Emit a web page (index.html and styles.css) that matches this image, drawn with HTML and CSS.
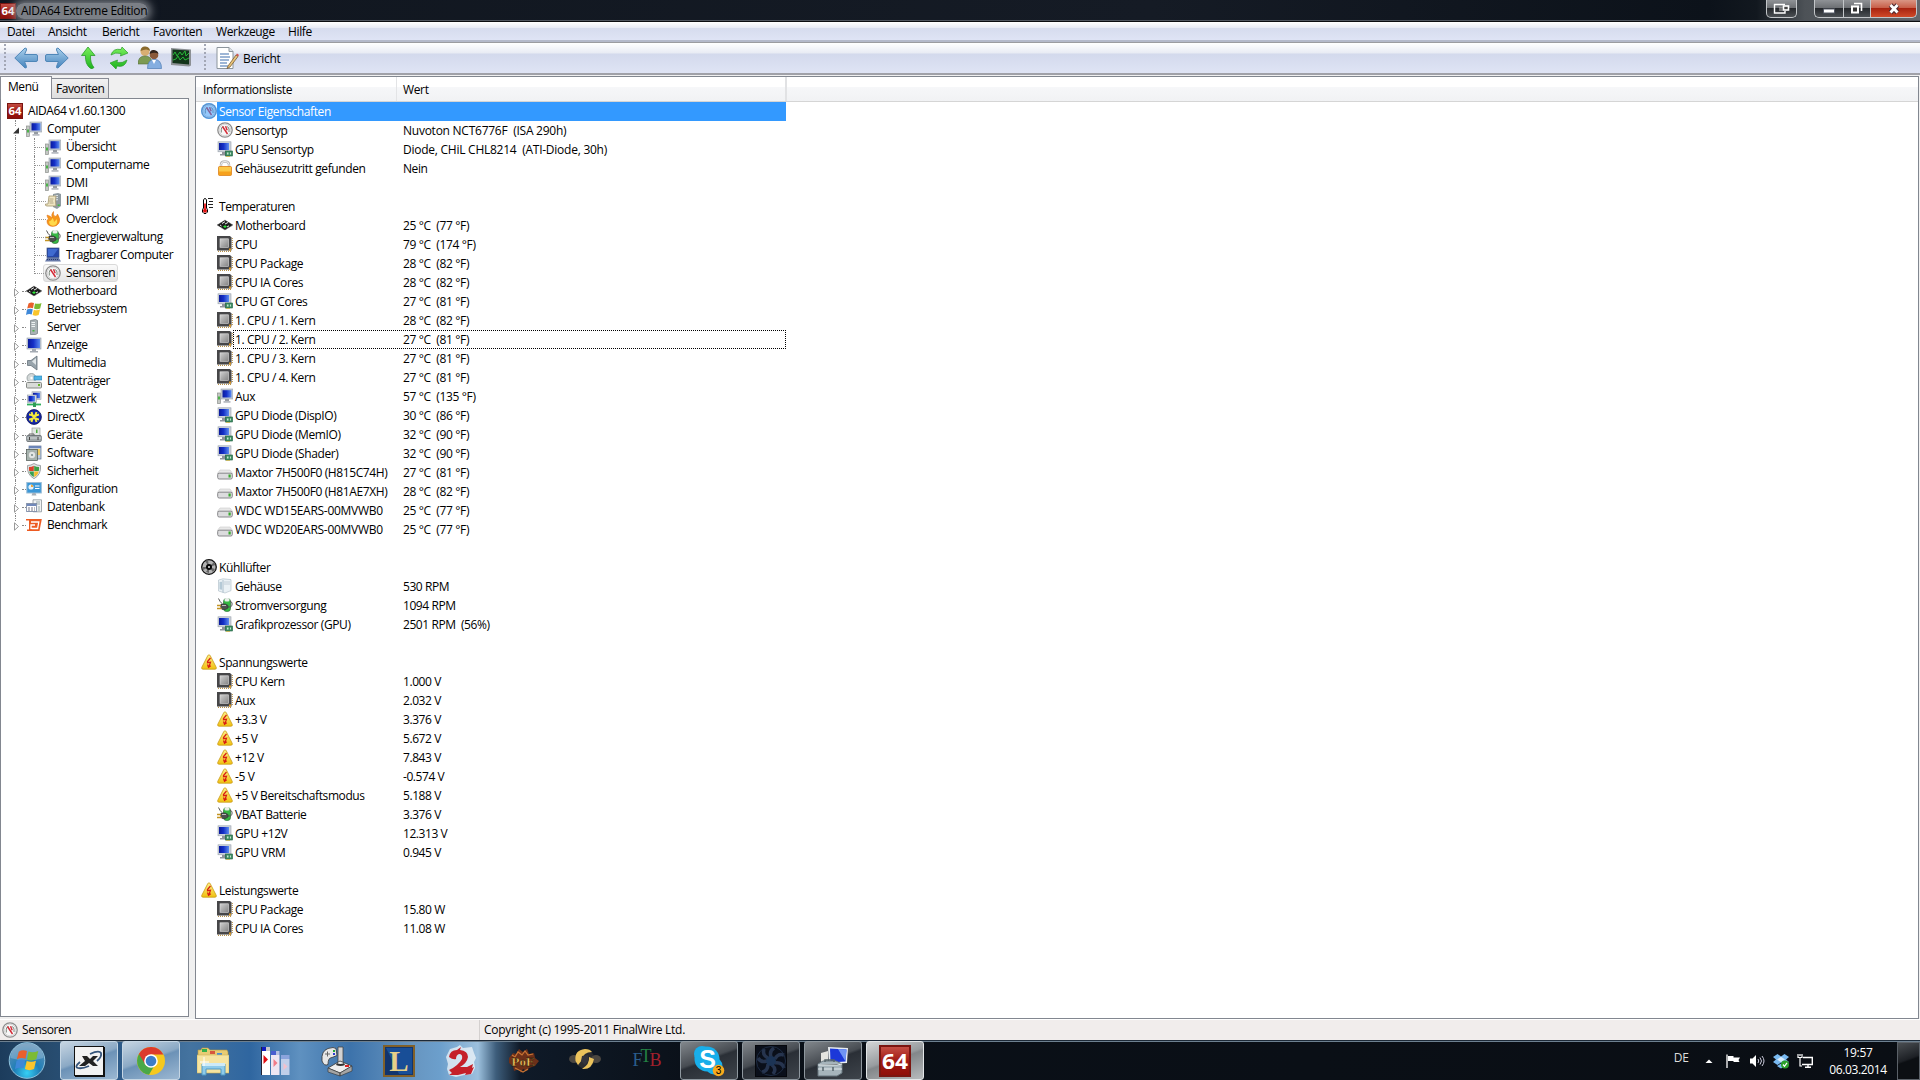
FILE: index.html
```html
<!DOCTYPE html>
<html lang="de">
<head>
<meta charset="utf-8">
<title>AIDA64 Extreme Edition</title>
<link rel="stylesheet" href="styles.css">
</head>
<body>
<svg class="defs" width="0" height="0">
<defs>
<linearGradient id="gRed" x1="0" y1="0" x2="0" y2="1"><stop offset="0" stop-color="#c8544a"/><stop offset=".5" stop-color="#a01a12"/><stop offset="1" stop-color="#8c0d08"/></linearGradient>
<linearGradient id="gBlue" x1="0" y1="0" x2="1" y2="0"><stop offset="0" stop-color="#0a1a9c"/><stop offset=".45" stop-color="#1530c8"/><stop offset="1" stop-color="#5b8cf0"/></linearGradient>
<linearGradient id="gChip" x1="0" y1="0" x2="1" y2="1"><stop offset="0" stop-color="#d0d0d0"/><stop offset="1" stop-color="#858585"/></linearGradient>
<linearGradient id="gYel" x1="0" y1="0" x2="0" y2="1"><stop offset="0" stop-color="#fff08a"/><stop offset="1" stop-color="#f0c010"/></linearGradient>
<linearGradient id="gArrow" x1="0" y1="0" x2="0" y2="1"><stop offset="0" stop-color="#a9d0ec"/><stop offset="1" stop-color="#4583bd"/></linearGradient>
<linearGradient id="gGreen" x1="0" y1="0" x2="0" y2="1"><stop offset="0" stop-color="#7af05c"/><stop offset="1" stop-color="#1db31f"/></linearGradient>
<radialGradient id="gOrb" cx=".5" cy=".85" r=".8"><stop offset="0" stop-color="#35d0f5"/><stop offset=".45" stop-color="#1f7fb8"/><stop offset="1" stop-color="#5f8fb5"/></radialGradient>
<symbol id="aida" viewBox="0 0 16 16"><rect width="16" height="16" fill="url(#gRed)"/><rect x=".5" y=".5" width="15" height="15" fill="none" stroke="#7a1510"/><text x="8" y="12" text-anchor="middle" class="logo64" textLength="13" lengthAdjust="spacingAndGlyphs">64</text></symbol>
<symbol id="pc" viewBox="0 0 16 16"><rect x=".5" y="5" width="3" height="10.5" fill="#c4c8c4" stroke="#8d918d" stroke-width=".7"/><rect x="1.2" y="8.5" width="1.6" height="3" fill="#2fae2b"/><rect x="4" y="1" width="12" height="10" fill="#c3cad4" stroke="#98a0aa" stroke-width=".6"/><rect x="5.500" y="2.200" width="9" height="7.300" fill="url(#gBlue)"/><path d="M8 11h4v2H8z" fill="#969ba2"/><path d="M6.500 13h7v1.800h-7z" fill="#b8bcc2"/></symbol>
<symbol id="gpu" viewBox="0 0 16 16"><rect x="1" y=".8" width="13" height="10" fill="#ccd2da" stroke="#9aa2ac" stroke-width=".6"/><rect x="2" y="2" width="10" height="7" fill="url(#gBlue)"/><path d="M5 11h4v2H5zM3 13h6v1.500H3z" fill="#8f949b"/><rect x="8.500" y="10" width="7" height="5" fill="#3f8f64" stroke="#1c5a3c" stroke-width=".6"/><path d="M10 11.500h1.500v2H10zm3 0h1v2h-1z" fill="#c4e6ce"/><path d="M9 15.500h4" stroke="#c9b24a" stroke-width=".8"/></symbol>
<symbol id="mon" viewBox="0 0 16 16"><rect x="1" y="1" width="14" height="11" fill="#c4ccd8" stroke="#8e97a5" stroke-width=".6"/><rect x="2" y="2" width="12" height="9" fill="url(#gBlue)"/><path d="M6 12h4v2H6zM4 14h8v1.500H4z" fill="#a5abb3"/></symbol>
<symbol id="lap" viewBox="0 0 16 16"><rect x="2" y="1" width="12" height="9.500" fill="#2646a8" stroke="#3a5080" stroke-width=".7"/><path d="M3 2h10L8 9H3z" fill="#3f6ad0"/><path d="M2 11h12l2 3.500H0z" fill="#6779a8"/><path d="M2 12.500h12" stroke="#28396b" stroke-dasharray="1 1"/></symbol>
<symbol id="gauge" viewBox="0 0 16 16"><circle cx="8" cy="8" r="7.200" fill="#f7f7f7" stroke="#8c8c8c" stroke-width="1.300"/><circle cx="8" cy="8" r="5.800" fill="none" stroke="#c8c8c8" stroke-width=".7"/><path d="M4.300 10.500V7.300Q4.300 4.800 6.500 4.500M9.700 4.500Q12 5 12 7.300V10" fill="none" stroke="#6e7a6e" stroke-width=".9"/><path d="M5.500 4.500l5 7.500M8.500 4.200l1.700 4" stroke="#d42a36" stroke-width="1.400"/></symbol>
<symbol id="lock" viewBox="0 0 16 16"><path d="M4 8V4.500Q4 1.500 8 1.500T12 4.500V8" fill="none" stroke="#b5b5b5" stroke-width="2.400"/><path d="M4 8V4.500Q4 1.500 8 1.500T12 4.500V8" fill="none" stroke="#f0f0f0" stroke-width="1"/><rect x="1.500" y="6.500" width="13" height="9" rx="1" fill="#f6a11c" stroke="#d8790e" stroke-width=".7"/><path d="M2 7h12v4.500H2z" fill="#fbc848"/></symbol>
<symbol id="thermo" viewBox="0 0 16 16"><path d="M2.500 10V2l1-1.500h1l1 1.500v8l1 1.500V14l-1.500 1.500H3L1.500 14v-2.500z" fill="#fff" stroke="#000"/><path d="M4 5.500v6" stroke="#e00" stroke-width="1.600"/><circle cx="4" cy="12.800" r="2" fill="#e01010"/><path d="M7 .5h5M8 3.500h4M7 6.500h5M8 9.500h4" stroke="#222"/></symbol>
<symbol id="board" viewBox="0 0 16 16"><path d="M0 8l8-5 8 5-8 5z" fill="#1c1c1c"/><path d="M0 8l8-5 8 5-8 5z" fill="none" stroke="#777" stroke-width=".7" stroke-dasharray="1 1"/><path d="M5 6.500l3-1.800M8 7l3-1.500M3 8l1.500 1M10 10l2-1.200" stroke="#eee" stroke-width="1"/><path d="M6 9.500l2-1.300 2 1.300-2 1.500z" fill="#2ee83a"/></symbol>
<symbol id="chip" viewBox="0 0 16 16"><path d="M1 15.300h13M15.300 2v12" stroke="#b8924a" stroke-width="1.200" stroke-dasharray="1 1"/><path d="M0 0h13l1.500 1.500V14.500H0z" fill="#464648"/><rect x="3" y="2.800" width="8.500" height="8.500" fill="url(#gChip)" stroke="#ddd" stroke-width=".6"/><path d="M12 12.500h2v2h-2z" fill="#e09a20"/></symbol>
<symbol id="disk" viewBox="0 0 16 16"><path d="M3 6h10l3 4H0z" fill="#e8e8e8" stroke="#c9c9c9" stroke-width=".6"/><rect x=".7" y="9.200" width="14.600" height="5.800" rx="1.500" fill="#dcdcde" stroke="#88888c"/><rect x="11.500" y="10.500" width="2.200" height="3" fill="#37a82c"/></symbol>
<symbol id="fan" viewBox="0 0 16 16"><circle cx="8" cy="8" r="7.300" fill="#b4b4b4" stroke="#111" stroke-width="1.300"/><path d="M8 8L4 2l3-1zM8 8l5-5 1.500 3zM8 8l6 2-2 3zM8 8l0 6-3-1zM8 8l-6 3-.5-3z" fill="#666"/><circle cx="8" cy="8" r="3" fill="#050505"/><circle cx="8" cy="8" r="1" fill="#eee"/></symbol>
<symbol id="case" viewBox="0 0 16 16"><path d="M1.500 2L6 .8l8 .8v11L8 15l-6.500-2z" fill="#eaf1f5" stroke="#b4c3cc" stroke-width=".7"/><path d="M6 2v12.500" stroke="#9fb4c2" stroke-width=".8"/><path d="M2.500 4l2.500-.3v8l-2.500-.4z" fill="#b4c9d6"/><path d="M7 4h6M7 6h6" stroke="#b9c7d0" stroke-width=".8"/></symbol>
<symbol id="power" viewBox="0 0 16 16"><rect x="6.500" y="1.500" width="7" height="13" rx="3" fill="#36b843" stroke="#2c6e36" stroke-width=".7"/><rect x="7.500" y="1" width="5" height="3.500" rx="1.500" fill="#e8efe8"/><path d="M1.500 1.500Q3 5 5 6.500M13 4q3 1 2 4.500-1 2-4 1.500" fill="none" stroke="#555" stroke-width="1"/><path d="M4 7h4.500l2.500 1.500v2.500L8.500 12.500H5L3.500 10z" fill="#4c504e" stroke="#262826" stroke-width=".5"/><path d="M0 8.500h4M0 11.500h4.500" stroke="#c39422" stroke-width="1.300"/><path d="M5 8.500h4" stroke="#bbb" stroke-width="1"/></symbol>
<symbol id="warn" viewBox="0 0 16 16"><path d="M8 .8Q8.800.8 9.300 1.800L15.300 13.500Q15.700 15.200 14 15.200H2Q.3 15.200.7 13.500L6.700 1.800Q7.200.8 8 .8z" fill="url(#gYel)" stroke="#c99a18" stroke-width=".8"/><path d="M9.500 4L6.500 7.500v1.200l3-.5-1.500 4.300M6.500 10.500l1 2.800 2.300-1.500" fill="none" stroke="#d81c12" stroke-width="1.200"/></symbol>
<symbol id="ipmi" viewBox="0 0 16 16"><path d="M8 1l5-1 3 1v12l-4 3-4-2z" fill="#8f9aa0"/><path d="M9 3l4-.5M9 5l4-.5M9 7l4-.3" stroke="#e3e8ea"/><rect x="12.700" y="11.500" width="2" height="1.500" fill="#3cc03a"/><path d="M4 3h7q-1 3 0 10H2q-2 0-1.500-2H3z" fill="#efe5c2" stroke="#a2946c" stroke-width=".8"/><path d="M4.500 6h4M4 8h4M4.500 10h4" stroke="#a49a7a" stroke-width=".8"/></symbol>
<symbol id="flame" viewBox="0 0 16 16"><path d="M2 4Q6 5 7 7 6 3 8.500.5 8 4 10 5.500 12 5 12.500 3 16 8 14 12 12 15.500 7.500 15.500 2.500 15 2 11 1.500 8.500 3.500 8 2 6 2 4z" fill="#f5961c" stroke="#e0701a" stroke-width=".5"/><path d="M4 10Q6 11 7.500 7 9 9 9 11L12 8Q13 14.500 8 14.700 4 14.500 4 10z" fill="#ffd94a"/></symbol>
<symbol id="win" viewBox="0 0 16 16"><path d="M2.500 2.500Q5 .8 8 2L7 7.200Q4.200 6 1.200 7.500z" fill="#e9602c"/><path d="M9 2.400Q12 3.500 15.500 2L14.200 7.500Q11 9 8 7.600z" fill="#7cbb33"/><path d="M1 8.500Q4 7 6.800 8.200L5.700 13.500Q3 12.500 0 14z" fill="#3e88d8"/><path d="M7.800 8.700Q11 9.800 14 8.500L12.700 14Q9.500 15.500 6.600 14z" fill="#fac52c"/></symbol>
<symbol id="server" viewBox="0 0 16 16"><path d="M4.500 1.500l5-1 2 1v13l-2 1h-5z" fill="#aab2b5" stroke="#70787c" stroke-width=".7"/><path d="M5.500 3.500h3.500M5.500 5.500h3.500M5.500 7.500h3.500" stroke="#eef1f2"/><rect x="6.500" y="11" width="2" height="1.500" fill="#43b83e"/></symbol>
<symbol id="sound" viewBox="0 0 16 16"><path d="M1.500 5.500h3.500l6-4.500v14l-6-4.500H1.500z" fill="#98a4ac" stroke="#66727b" stroke-width=".8"/><path d="M6 6.500l4-3.500v7z" fill="#dfe5e8"/></symbol>
<symbol id="drives" viewBox="0 0 16 16"><circle cx="5.500" cy="5" r="4.500" fill="#d3d8d8" stroke="#8d9799" stroke-width=".8"/><circle cx="5.500" cy="5" r="1.200" fill="#fff"/><rect x="8" y="3" width="8" height="4" fill="#4fb4e4" stroke="#2980b4" stroke-width=".6"/><path d="M2 8h12l2 2H0z" fill="#eee"/><rect x=".5" y="9.500" width="15" height="5.500" rx="1" fill="#d9dbd8" stroke="#858985"/><rect x="12" y="11" width="2" height="2" fill="#69b72a"/></symbol>
<symbol id="net" viewBox="0 0 16 16"><rect x="6" y=".8" width="9" height="7.500" fill="#d5dae0" stroke="#949ca8" stroke-width=".6"/><rect x="7" y="1.800" width="7" height="5.500" fill="url(#gBlue)"/><rect x="1.500" y="4" width="9" height="7.500" fill="#d5dae0" stroke="#949ca8" stroke-width=".6"/><rect x="2.500" y="5" width="6.500" height="5.500" fill="url(#gBlue)"/><path d="M1 13.500h14" stroke="#2fae5c" stroke-width="1.800"/><path d="M7 11.500h3V16H7z" fill="#2d9e54"/></symbol>
<symbol id="dx" viewBox="0 0 16 16"><circle cx="8" cy="8" r="7.400" fill="#1426a8" stroke="#0a1258" stroke-width=".8"/><path d="M3 5.500Q6 5.500 8 8M5.500 3Q6 5.500 8 8M10.500 3Q10 5.500 8 8M13 5.500Q10.500 6 8 8M3 10.500Q6 10.500 8 8M5.500 13Q6 10.500 8 8M13 10.500Q11 10.500 8 8M10.500 13Q10 10.500 8 8" stroke="#f4ea3c" stroke-width="1.900" fill="none"/></symbol>
<symbol id="dev" viewBox="0 0 16 16"><rect x="6" y="1" width="8" height="8" fill="#e2e6e2" stroke="#8b9189" stroke-width=".6"/><rect x="10" y="2.500" width="1.500" height="3.500" fill="#4bac3e"/><path d="M3 8.500V7h5v1.500" fill="none" stroke="#666"/><rect x=".7" y="8.500" width="14.600" height="6" rx="1" fill="#a1a8aa" stroke="#5f676b" stroke-width=".8"/><path d="M1 11h14" stroke="#e3e7e7" stroke-width=".8"/><path d="M3.500 10v3M12 10v3" stroke="#444"/></symbol>
<symbol id="soft" viewBox="0 0 16 16"><rect x="3" y="1" width="12" height="13" fill="#c2cede" stroke="#5b6f90" stroke-width=".7"/><path d="M3 1h12v2H3z" fill="#6b85b8"/><path d="M7 4h7v6H9z" fill="#f0cc5c"/><rect x=".5" y="4.500" width="11" height="11" fill="#a7b4af" stroke="#4b5551" stroke-width=".7"/><circle cx="6" cy="10" r="3.800" fill="#e2e6e4" stroke="#8c9490" stroke-width=".6"/><circle cx="6" cy="10" r="1" fill="#788"/></symbol>
<symbol id="shield" viewBox="0 0 16 16"><path d="M8 .5Q11 2.500 14.500 2.500 15.500 11.500 8 15.700.5 11.500 1.500 2.500 5 2.500 8 .5z" fill="#e3e5e6" stroke="#8b9093" stroke-width=".8"/><path d="M7.800 2.800V8H3.200Q2.700 6 3 4 6 4 7.800 2.800z" fill="#d9432a"/><path d="M8.200 2.800Q10 4 13 4q.3 2-.2 4H8.200z" fill="#3da044"/><path d="M3.300 8.400h4.500V14Q4 12 3.300 8.400z" fill="#38a050"/><path d="M12.700 8.400H8.200V14Q12 12 12.700 8.400z" fill="#f4bc2c"/></symbol>
<symbol id="conf" viewBox="0 0 16 16"><rect x=".8" y="1.500" width="14.500" height="10.500" fill="#3b97d7" stroke="#9bbdd6"/><circle cx="5" cy="6" r="2.600" fill="#e4f1fb"/><path d="M5 6V3.400A2.600 2.600 0 0 1 7.500 6z" fill="#f1a83a"/><path d="M9 5h4.500M9 7.500h4.500" stroke="#fff" stroke-width="1.200"/><path d="M5.500 14.500h5L9.500 12h-3z" fill="#a7b0b8"/></symbol>
<symbol id="db" viewBox="0 0 16 16"><path d="M7 .8h8.500v12H7z" fill="#f1f3f4" stroke="#8d969c" stroke-width=".8"/><path d="M10 3h4M10 5h4M13 7v5" stroke="#9aa"/><rect x=".6" y="4.500" width="10" height="8" fill="#fff" stroke="#7c8ba5" stroke-width=".9"/><path d="M1 5h9v2H1z" fill="#7189bb"/><path d="M2 9h7M2 11h7" stroke="#778" stroke-dasharray="2 1"/></symbol>
<symbol id="bench" viewBox="0 0 16 16"><path d="M3 2h12.800l-2.300 12H3z" fill="#ed5b22"/><path d="M5 5h7.800l-1.200 6.500H5V8h4" fill="none" stroke="#fff" stroke-width="1.300"/><path d="M0 2.800h4M1 13.200h5" stroke="#ed5b22" stroke-width="1.500"/></symbol>
</defs>
</svg>

<header class="titlebar">
  <svg class="i"><use href="#aida"/></svg>
  <span class="title">AIDA64 Extreme Edition</span>
  <div class="wbtn solo"><svg width="18" height="14" viewBox="0 0 18 14"><path d="M12 2.500H1.500v8.500h10.500V9" fill="none" stroke="#fff" stroke-width="1.400"/><rect x="10.500" y="4" width="5" height="4" fill="#444" stroke="#fff" stroke-width="1.600"/><path d="M7 5v4M9 5v4" stroke="#bbb"/></svg></div>
  <div class="wgroup">
    <div class="wbtn min"><svg width="14" height="12" viewBox="0 0 14 12"><rect x="1.500" y="6" width="11" height="4" fill="#fff" stroke="#555a66"/></svg></div>
    <div class="wbtn res"><svg width="14" height="13" viewBox="0 0 14 13"><path d="M5 1.500h7.500V9" fill="none" stroke="#fff" stroke-width="1.600"/><rect x="3" y="4.500" width="6" height="6" fill="#333" stroke="#fff" stroke-width="2"/></svg></div>
    <div class="wbtn close"><svg width="14" height="12" viewBox="0 0 14 12"><path d="M3.500 2l7 7.500M10.500 2l-7 7.500" stroke="#4c2a30" stroke-width="4.800"/><path d="M3.500 2l7 7.500M10.500 2l-7 7.500" stroke="#fff" stroke-width="2.800"/></svg></div>
  </div>
</header>

<nav class="menubar"><span>Datei</span><span>Ansicht</span><span>Bericht</span><span>Favoriten</span><span>Werkzeuge</span><span>Hilfe</span></nav>

<div class="toolbar">
  <i class="grip"></i>
  <svg viewBox="0 0 24 24"><path d="M.8 12L11 2q2 0 1.500 2l-2 4.500H22q1.500 0 1.500 1.500v4q0 1.500-1.500 1.500H10.500l2 5q.5 1.500-1.500 1.500z" fill="url(#gArrow)" stroke="#4f87b8"/></svg>
  <svg viewBox="0 0 24 24"><path d="M23.200 12L13 2q-2 0-1.500 2l2 4.500H2Q.5 8.500.5 10v4q0 1.500 1.500 1.500h11.500l-2 5q-.5 1.500 1.500 1.500z" fill="url(#gArrow)" stroke="#4f87b8"/></svg>
  <svg viewBox="0 0 24 24"><path d="M12 1l7 8.500h-4.500Q14 17 18 21.500q-2 2-4 .5-5-4-4.500-12.500H5.500z" fill="url(#gGreen)" stroke="#2b9c2a" stroke-width=".8"/></svg>
  <svg viewBox="0 0 24 24"><path d="M4 9Q6 2 14 3.500L15 1l6 6-7.500 3 .5-2.500Q8 6 4 9zM20 14Q18 22 10 20L9 23 3 17l7.500-3L10 16.500q5.500 1 10-2.500z" fill="url(#gGreen)" stroke="#2b9c2a" stroke-width=".7"/></svg>
  <svg viewBox="0 0 24 24"><circle cx="7" cy="5.500" r="4.500" fill="#d8ae72"/><path d="M2.500 5Q3 0 7.500.5T12 5Q9 2 2.500 5z" fill="#8a6a2d"/><path d="M0 18q0-8 7-8t7 8z" fill="#7c9a52" stroke="#56703a" stroke-width=".6"/><circle cx="16" cy="9" r="4.300" fill="#8a5a3a"/><path d="M11.500 8Q12 3.500 16 4t4.500 4Q17 5.500 11.500 8z" fill="#33251c"/><path d="M9.500 22.500q0-9 7-9t7 9z" fill="#84aee0" stroke="#4f7cb4" stroke-width=".7"/><path d="M14 14h4l-2 4z" fill="#fff"/></svg>
  <svg class="scr" viewBox="0 0 24 24"><path d="M2 2l20 1.500v16l-2 1L2 19z" fill="#8c9094"/><path d="M3.500 3.500l16.500 1V18.500L3.500 17z" fill="#12331a"/><path d="M4 9l2-3 2 4 3-4 2 3 3-4 1 5 3-3M4 14l3-1 2-3 2 4 3-3 2 3 4-2" fill="none" stroke="#27b838" stroke-width="1"/></svg>
  <i class="grip two"></i>
  <svg class="rep" viewBox="0 0 24 24"><path d="M2 1.500h12l4 4v17H2z" fill="#fff" stroke="#8c959c"/><path d="M14 1.500v4h4" fill="#dde3e7" stroke="#8c959c"/><path d="M5 8h9M5 11h10M5 14h9M5 17h7M5 20h8" stroke="#3f6fae" stroke-width="1.200"/><path d="M13 20l8-11 2 1.500L15 21l-3 1.500z" fill="#e8c47a" stroke="#6d4c22" stroke-width=".7"/><path d="M21 9l1-1.500 2 1.500-1 1.500z" fill="#d0524a"/></svg>
  <span>Bericht</span>
</div>

<main class="work">
  <section class="left">
    <div class="tabs"><span class="tab on">Menü</span><span class="tab">Favoriten</span></div>
    <ul class="tree">
      <li class="root"><svg class="i"><use href="#aida"/></svg>AIDA64 v1.60.1300</li>
      <li class="n open"><svg class="ex" viewBox="0 0 9 9"><path d="M7 1.500v6H1z" fill="#333"/></svg><svg class="i"><use href="#pc"/></svg>Computer</li>
      <li class="c"><svg class="i"><use href="#pc"/></svg>Übersicht</li>
      <li class="c"><svg class="i"><use href="#pc"/></svg>Computername</li>
      <li class="c"><svg class="i"><use href="#pc"/></svg>DMI</li>
      <li class="c"><svg class="i"><use href="#ipmi"/></svg>IPMI</li>
      <li class="c"><svg class="i"><use href="#flame"/></svg>Overclock</li>
      <li class="c"><svg class="i"><use href="#power"/></svg>Energieverwaltung</li>
      <li class="c"><svg class="i"><use href="#lap"/></svg>Tragbarer Computer</li>
      <li class="c last"><span class="sel"><svg class="i"><use href="#gauge"/></svg>Sensoren</span></li>
      <li class="n"><svg class="ex" viewBox="0 0 9 9"><path d="M2.500.8v7.400L6.500 4.500z" fill="#fff" stroke="#999"/></svg><svg class="i"><use href="#board"/></svg>Motherboard</li>
      <li class="n"><svg class="ex" viewBox="0 0 9 9"><path d="M2.500.8v7.400L6.500 4.500z" fill="#fff" stroke="#999"/></svg><svg class="i"><use href="#win"/></svg>Betriebssystem</li>
      <li class="n"><svg class="ex" viewBox="0 0 9 9"><path d="M2.500.8v7.400L6.500 4.500z" fill="#fff" stroke="#999"/></svg><svg class="i"><use href="#server"/></svg>Server</li>
      <li class="n"><svg class="ex" viewBox="0 0 9 9"><path d="M2.500.8v7.400L6.500 4.500z" fill="#fff" stroke="#999"/></svg><svg class="i"><use href="#mon"/></svg>Anzeige</li>
      <li class="n"><svg class="ex" viewBox="0 0 9 9"><path d="M2.500.8v7.400L6.500 4.500z" fill="#fff" stroke="#999"/></svg><svg class="i"><use href="#sound"/></svg>Multimedia</li>
      <li class="n"><svg class="ex" viewBox="0 0 9 9"><path d="M2.500.8v7.400L6.500 4.500z" fill="#fff" stroke="#999"/></svg><svg class="i"><use href="#drives"/></svg>Datenträger</li>
      <li class="n"><svg class="ex" viewBox="0 0 9 9"><path d="M2.500.8v7.400L6.500 4.500z" fill="#fff" stroke="#999"/></svg><svg class="i"><use href="#net"/></svg>Netzwerk</li>
      <li class="n"><svg class="ex" viewBox="0 0 9 9"><path d="M2.500.8v7.400L6.500 4.500z" fill="#fff" stroke="#999"/></svg><svg class="i"><use href="#dx"/></svg>DirectX</li>
      <li class="n"><svg class="ex" viewBox="0 0 9 9"><path d="M2.500.8v7.400L6.500 4.500z" fill="#fff" stroke="#999"/></svg><svg class="i"><use href="#dev"/></svg>Geräte</li>
      <li class="n"><svg class="ex" viewBox="0 0 9 9"><path d="M2.500.8v7.400L6.500 4.500z" fill="#fff" stroke="#999"/></svg><svg class="i"><use href="#soft"/></svg>Software</li>
      <li class="n"><svg class="ex" viewBox="0 0 9 9"><path d="M2.500.8v7.400L6.500 4.500z" fill="#fff" stroke="#999"/></svg><svg class="i"><use href="#shield"/></svg>Sicherheit</li>
      <li class="n"><svg class="ex" viewBox="0 0 9 9"><path d="M2.500.8v7.400L6.500 4.500z" fill="#fff" stroke="#999"/></svg><svg class="i"><use href="#conf"/></svg>Konfiguration</li>
      <li class="n"><svg class="ex" viewBox="0 0 9 9"><path d="M2.500.8v7.400L6.500 4.500z" fill="#fff" stroke="#999"/></svg><svg class="i"><use href="#db"/></svg>Datenbank</li>
      <li class="n end"><svg class="ex" viewBox="0 0 9 9"><path d="M2.500.8v7.400L6.500 4.500z" fill="#fff" stroke="#999"/></svg><svg class="i"><use href="#bench"/></svg>Benchmark</li>
    </ul>
  </section>

  <section class="right">
    <div class="head"><span>Informationsliste</span><span>Wert</span></div>
    <div class="rows">
      <div class="r g hl"><svg class="i"><use href="#gauge"/></svg><span class="k">Sensor Eigenschaften</span></div>
      <div class="r"><svg class="i"><use href="#gauge"/></svg><span class="k">Sensortyp</span><span class="v">Nuvoton NCT6776F  (ISA 290h)</span></div>
      <div class="r"><svg class="i"><use href="#gpu"/></svg><span class="k">GPU Sensortyp</span><span class="v">Diode, CHiL CHL8214  (ATI-Diode, 30h)</span></div>
      <div class="r"><svg class="i"><use href="#lock"/></svg><span class="k">Gehäusezutritt gefunden</span><span>Nein</span></div>
      <div class="r"></div>
      <div class="r g"><svg class="i"><use href="#thermo"/></svg><span class="k">Temperaturen</span></div>
      <div class="r"><svg class="i"><use href="#board"/></svg><span class="k">Motherboard</span><span class="d">25 °C  (77 °F)</span></div>
      <div class="r"><svg class="i"><use href="#chip"/></svg><span class="k">CPU</span><span class="d">79 °C  (174 °F)</span></div>
      <div class="r"><svg class="i"><use href="#chip"/></svg><span class="k">CPU Package</span><span class="d">28 °C  (82 °F)</span></div>
      <div class="r"><svg class="i"><use href="#chip"/></svg><span class="k">CPU IA Cores</span><span class="d">28 °C  (82 °F)</span></div>
      <div class="r"><svg class="i"><use href="#gpu"/></svg><span class="k">CPU GT Cores</span><span class="d">27 °C  (81 °F)</span></div>
      <div class="r"><svg class="i"><use href="#chip"/></svg><span class="k">1. CPU / 1. Kern</span><span class="d">28 °C  (82 °F)</span></div>
      <div class="r foc"><svg class="i"><use href="#chip"/></svg><span class="k">1. CPU / 2. Kern</span><span class="d">27 °C  (81 °F)</span></div>
      <div class="r"><svg class="i"><use href="#chip"/></svg><span class="k">1. CPU / 3. Kern</span><span class="d">27 °C  (81 °F)</span></div>
      <div class="r"><svg class="i"><use href="#chip"/></svg><span class="k">1. CPU / 4. Kern</span><span class="d">27 °C  (81 °F)</span></div>
      <div class="r"><svg class="i"><use href="#pc"/></svg><span class="k">Aux</span><span class="d">57 °C  (135 °F)</span></div>
      <div class="r"><svg class="i"><use href="#gpu"/></svg><span class="k">GPU Diode (DispIO)</span><span class="d">30 °C  (86 °F)</span></div>
      <div class="r"><svg class="i"><use href="#gpu"/></svg><span class="k">GPU Diode (MemIO)</span><span class="d">32 °C  (90 °F)</span></div>
      <div class="r"><svg class="i"><use href="#gpu"/></svg><span class="k">GPU Diode (Shader)</span><span class="d">32 °C  (90 °F)</span></div>
      <div class="r"><svg class="i"><use href="#disk"/></svg><span class="k">Maxtor 7H500F0 (H815C74H)</span><span class="d">27 °C  (81 °F)</span></div>
      <div class="r"><svg class="i"><use href="#disk"/></svg><span class="k">Maxtor 7H500F0 (H81AE7XH)</span><span class="d">28 °C  (82 °F)</span></div>
      <div class="r"><svg class="i"><use href="#disk"/></svg><span class="k w">WDC WD15EARS-00MVWB0</span><span class="d">25 °C  (77 °F)</span></div>
      <div class="r"><svg class="i"><use href="#disk"/></svg><span class="k w">WDC WD20EARS-00MVWB0</span><span class="d">25 °C  (77 °F)</span></div>
      <div class="r"></div>
      <div class="r g"><svg class="i"><use href="#fan"/></svg><span class="k">Kühllüfter</span></div>
      <div class="r"><svg class="i"><use href="#case"/></svg><span class="k">Gehäuse</span><span>530 RPM</span></div>
      <div class="r"><svg class="i"><use href="#power"/></svg><span class="k">Stromversorgung</span><span>1094 RPM</span></div>
      <div class="r"><svg class="i"><use href="#gpu"/></svg><span class="k">Grafikprozessor (GPU)</span><span>2501 RPM  (56%)</span></div>
      <div class="r"></div>
      <div class="r g"><svg class="i"><use href="#warn"/></svg><span class="k">Spannungswerte</span></div>
      <div class="r"><svg class="i"><use href="#chip"/></svg><span class="k">CPU Kern</span><span>1.000 V</span></div>
      <div class="r"><svg class="i"><use href="#chip"/></svg><span class="k">Aux</span><span>2.032 V</span></div>
      <div class="r"><svg class="i"><use href="#warn"/></svg><span class="k">+3.3 V</span><span>3.376 V</span></div>
      <div class="r"><svg class="i"><use href="#warn"/></svg><span class="k">+5 V</span><span>5.672 V</span></div>
      <div class="r"><svg class="i"><use href="#warn"/></svg><span class="k">+12 V</span><span>7.843 V</span></div>
      <div class="r"><svg class="i"><use href="#warn"/></svg><span class="k">-5 V</span><span>-0.574 V</span></div>
      <div class="r"><svg class="i"><use href="#warn"/></svg><span class="k">+5 V Bereitschaftsmodus</span><span>5.188 V</span></div>
      <div class="r"><svg class="i"><use href="#power"/></svg><span class="k">VBAT Batterie</span><span>3.376 V</span></div>
      <div class="r"><svg class="i"><use href="#gpu"/></svg><span class="k">GPU +12V</span><span>12.313 V</span></div>
      <div class="r"><svg class="i"><use href="#gpu"/></svg><span class="k">GPU VRM</span><span>0.945 V</span></div>
      <div class="r"></div>
      <div class="r g"><svg class="i"><use href="#warn"/></svg><span class="k">Leistungswerte</span></div>
      <div class="r"><svg class="i"><use href="#chip"/></svg><span class="k">CPU Package</span><span>15.80 W</span></div>
      <div class="r"><svg class="i"><use href="#chip"/></svg><span class="k">CPU IA Cores</span><span>11.08 W</span></div>
    </div>
  </section>
</main>

<footer class="status"><div><svg class="i"><use href="#gauge"/></svg>Sensoren</div><div>Copyright (c) 1995-2011 FinalWire Ltd.</div></footer>

<div class="taskbar">
  <div class="orb"><svg width="40" height="39" viewBox="0 0 40 39"><circle cx="20" cy="19.500" r="17.800" fill="url(#gOrb)" stroke="#8fc3de" stroke-width="1"/><path d="M3.500 17Q5 3 20 2.500 35 3 36.500 17 20 22 3.500 17z" fill="#fff" opacity=".22"/><svg x="8" y="7" width="24" height="24" viewBox="0 0 16 16"><use href="#win"/></svg></svg></div>
  <div class="t b lt"><svg viewBox="0 0 32 32"><rect x="1.500" y="1.500" width="29" height="29" fill="#f2f2f2" stroke="#111"/><path d="M31 2v29H2" fill="none" stroke="#111" stroke-width="2"/><path d="M9 11h5l3 3 3-3h5l-5 5 5 5h-5l-4-3-4 3H6l6-5z" fill="#222"/><path d="M7 17q-6 5-2 6 4 1 11-2M17 9q9-4 11-1 1 4-4 8" fill="none" stroke="#34537a" stroke-width="1.800"/></svg></div>
  <div class="t b lt"><svg viewBox="0 0 32 32"><circle cx="16" cy="16" r="14" fill="#f5c81e"/><path d="M16 16L3.900 9A14 14 0 0 0 14 29.800l5-8.500z" fill="#49a847"/><path d="M16 9.500h12.400A14 14 0 0 0 3.900 9L10 19z" fill="#dc3a2c"/><circle cx="16" cy="16" r="6.800" fill="#fff"/><circle cx="16" cy="16" r="5.300" fill="#3c7dc8"/></svg></div>
  <div class="t"><svg viewBox="0 0 32 32"><path d="M1 5h3l1-2h6l2 2h17l1 2v20H1z" fill="#e8cc74" stroke="#b5983f" stroke-width=".6"/><path d="M5 4h5v3H5z" fill="#35b04a"/><path d="M13 6h5v3h-5z" fill="#d8573d"/><path d="M20 8h5v3h-5z" fill="#4a8fd4"/><path d="M0 10h32v18H0z" fill="#f6e4a0" stroke="#cdb25c" stroke-width=".6"/><path d="M5 30V19h23v11h-4v-6H9v6z" fill="#8ecbea" stroke="#4f98c4"/><path d="M5 18h23v3H5z" fill="#cdeaf7"/><path d="M7 12v9M3 17h9" stroke="#fff"/></svg></div>
  <div class="t"><svg viewBox="0 0 32 32"><path d="M2 6h9v24H2z" fill="#fff"/><path d="M2 2h9v4H2z" fill="#111cc0"/><path d="M7 2h4v4H7z" fill="#c8c8c8"/><path d="M4.500 10v9l4.500-4.500z" fill="#e00c12"/><path d="M2.500 2v28" fill="none" stroke="#223"/><path d="M12 10h8.500v20H12z" fill="#eee6f2"/><path d="M12 6h8.500v4H12z" fill="#4a5ed0"/><path d="M17 6h3.500v4H17z" fill="#b4c0e0"/><path d="M14.500 14v8l4-4z" fill="#f27c88"/><path d="M22 14h8.500v16H22z" fill="#ccd6ee" opacity=".9"/><path d="M22 10h8.500v4H22z" fill="#8ba4dc"/><path d="M24.500 18v7l4-3.500z" fill="#f3c0cc"/></svg></div>
  <div class="t"><svg viewBox="0 0 32 32"><path d="M1 16Q0 6 7 3.500q6-2 8 0l1 7-5 2q-4 0-4 7-4 2-6-3.500z" fill="#e6e6e6" stroke="#333" stroke-width=".8"/><path d="M17 2h5v17h-5z" fill="#d2d2d2" stroke="#444" stroke-width=".8"/><path d="M7 23l12-7 12 5-12 7z" fill="#eee" stroke="#333" stroke-width=".8"/><path d="M7 23v4l12 4v-3zM31 21v5l-12 5v-3z" fill="#a4a4a4" stroke="#333" stroke-width=".6"/><path d="M4 9h5M6.500 6.500v5" stroke="#666"/><path d="M12 5h2v2h-2z" fill="#24a23a"/><path d="M12 8h2v2h-2z" fill="#263ad0"/><path d="M15.500 19q4 2 8 0" fill="none" stroke="#333" stroke-width="2"/><path d="M24 20h4v2h-4z" fill="#d22"/></svg></div>
  <div class="t"><svg viewBox="0 0 32 32"><rect x="1" y="1" width="30" height="30" fill="#12356e" stroke="#80602a" stroke-width="2"/><path d="M3 3h26v26H16z" fill="#1b5aa8" opacity=".7"/><text x="16" y="26" text-anchor="middle" class="lol">L</text></svg></div>
  <div class="t"><svg viewBox="0 0 32 32"><path d="M5 4l7-2 3-2 3 3 9-1 2 6 2 5-2 4 1 6-3 6-8 1-8 2-7-2-2-6 1-5-2-7z" fill="#fff" opacity=".65"/><path d="M4 12Q5 5 12 5l4-3-1 3q8 1 8 7-1 6-8 10h7l6-3-1 4 2-1-3 7-6 1 1-2-8 2H4l3-2-3-3q9-4 13-11 1-5-3-5-3 1-3 5-3 1-7-2z" fill="#c5202a"/></svg></div>
  <div class="t"><svg viewBox="0 0 32 32"><path d="M2 13l4-5 3 1 3-5 4 3 4-3 2 5 5-1 1 5 4 3-4 5-6 2-2 3-4-2-2 4-2-4-5 2-1-5-4-3z" fill="#6d3019"/><path d="M5 10l3 2 3-5 4 3 3-4 3 4 5-1M8 23l4 2 4 2 5-3" fill="none" stroke="#c87434" stroke-width="1.200"/><text x="16" y="20.500" text-anchor="middle" class="poe">PoE</text></svg></div>
  <div class="t"><svg viewBox="0 0 32 32"><circle cx="16" cy="14" r="9.500" fill="#2b2c30"/><ellipse cx="5" cy="14" rx="5" ry="4" fill="#4b4640"/><ellipse cx="27" cy="14" rx="5" ry="4" fill="#4b4640"/><path d="M6.500 16Q5 5 16 4q5 0 7 3-9 0-10 8l-4 5zM13 24q10 1 12-10l-5-2q1 7-7 12z" fill="#ecc35c"/><path d="M13 11l6-1v6l-3 4-4-4z" fill="#35353c"/></svg></div>
  <div class="t ftb"><span>F</span><span>T</span><span>B</span></div>
  <div class="t b"><svg viewBox="0 0 32 32"><circle cx="14" cy="14" r="12.500" fill="#18aeea"/><circle cx="9" cy="9" r="8" fill="#18aeea"/><circle cx="21" cy="21" r="8.500" fill="#18aeea"/><text x="14.500" y="23" text-anchor="middle" class="sky">S</text><circle cx="25.500" cy="25.500" r="5.800" fill="#f9a91c"/><text x="25.500" y="29" text-anchor="middle" class="cnt">3</text></svg></div>
  <div class="t b"><svg viewBox="0 0 32 32"><rect x=".5" y=".5" width="31" height="31" fill="#0a0f1a" stroke="#05070c"/><g fill="none" stroke="#26344e" stroke-width="3.500"><path d="M16 12Q14 6 19 3M20 14q3-6 9-4M20 18q7-1 9 5M17 20q5 4 1 9M13 19q0 7-6 8M12 16q-6 2-9-3M13 13Q7 10 9 4"/></g><circle cx="16" cy="16" r="5" fill="#1c3455"/><circle cx="16" cy="16" r="14.500" fill="none" stroke="#1d2b42"/></svg></div>
  <div class="t b"><svg viewBox="0 0 32 32"><path d="M4 8l7-2v14H4z" fill="#e4e4e0"/><path d="M11 2l20 1-1 15-18 1z" fill="#e8ecf0"/><path d="M13 3.500l16.500 1-1 12-15 1z" fill="#1c38d8"/><path d="M21 4l8.500.5-1 12z" fill="#6f94f4"/><path d="M1 19l5-3h13l6 3v9l-5 3H1z" fill="#a6b4bb" stroke="#66757d"/><path d="M1 20h19l5-1M1 24h24" stroke="#e2e9ec"/><path d="M8 17v-2h9v2M6 22v4M16 22v4" stroke="#56646b" stroke-width="1.500" fill="none"/></svg></div>
  <div class="t b act"><svg viewBox="0 0 16 16"><use href="#aida"/></svg></div>
  <div class="tray">
    <span class="de">DE</span>
    <svg class="up" viewBox="0 0 16 16"><path d="M4.500 10L8 6.500l3.500 3.500z" fill="#fff"/></svg>
    <svg viewBox="0 0 16 16"><path d="M2 1.500V15" stroke="#fff" stroke-width="1.300"/><path d="M3 3h5.500v1.500H15L13.500 7l1 2H8.500V8H3z" fill="#fff"/></svg>
    <svg viewBox="0 0 16 16"><path d="M1 5.500h2.500L7 2v12l-3.500-3.500H1z" fill="#fff"/><path d="M9 6q1.500 2 0 4M11 4.500q3 3.500 0 7M13 3q4 5 0 10" fill="none" stroke="#ccd" stroke-width="1"/></svg>
    <svg viewBox="0 0 16 16"><path d="M4.500 1L8 3.500 11.500 1 16 4l-3 2.500L16 9l-4.500 3L8 9.500 4.500 12 0 9l3-2.500L0 4zM8 10.500l4 2.500-4 2.500L4 13z" fill="#79b9f0"/><path d="M8 3.800l4 2.700-4 2.700-4-2.700z" fill="#d6ebfc"/><circle cx="12" cy="11.500" r="4" fill="#2ca02c"/><path d="M10 11.500l1.500 1.800L14 9.800" fill="none" stroke="#fff" stroke-width="1.200"/></svg>
    <svg viewBox="0 0 16 16"><path d="M6 4.500h9.300v7H5M8 14.200h6M11 11.500v3" fill="none" stroke="#fff" stroke-width="1.400"/><path d="M1 1v3.500h4V1M3 1v2M3 4.500V13h2" fill="none" stroke="#fff" stroke-width="1.200"/></svg>
    <div class="clock"><span>19:57</span><span>06.03.2014</span></div>
  </div>
  <div class="desk"></div>
</div>
</body>
</html>
```
FILE: styles.css
```css
* { box-sizing: border-box; }
html, body { margin: 0; height: 1080px; overflow: hidden; }
body {
  width: 1920px;
  display: flex;
  flex-direction: column;
  font: 12px/18px "Open Sans", "Noto Sans", sans-serif;
  letter-spacing: -0.43px;
  color: #000;
  background: #f0f0f0;
}
.defs { position: absolute; }
svg { display: block; flex: none; }
.i { width: 16px; height: 16px; }
.logo64 { font: bold 10.5px "Open Sans", sans-serif; fill: #fff; letter-spacing: 0; }

/* title bar */
.titlebar {
  height: 22px;
  display: flex;
  align-items: flex-start;
  background: linear-gradient(90deg, #10161f 0, #151b25 60%, #0c121a 89%, #12181f 91.5%, #4d5257 94%, #63676c 100%);
  border-bottom: 1px solid #0a0c10;
  box-shadow: inset 0 -1px #50565f;
  overflow: hidden;
}
.titlebar > .i { margin-top: 3px; }
.title {
  margin: 3px auto 0 0;
  padding: 0 1px 0 5px;
  line-height: 16px;
  letter-spacing: -0.3px;
  border-radius: 8px;
  background: rgba(150, 154, 160, .8);
  box-shadow: 0 0 9px 3px rgba(150, 154, 160, .8);
}
.wbtn {
  height: 18px;
  display: flex;
  align-items: center;
  justify-content: center;
  background: linear-gradient(#8f9296 0, #6d7074 45%, #26292d 50%, #4c5054 100%);
  border: 1px solid #c3c6c9;
  border-top: 0;
}
.solo { width: 31px; margin-right: 17px; border-radius: 0 0 5px 5px; }
.wgroup { display: flex; margin-right: 3px; }
.min { width: 29px; border-radius: 0 0 0 5px; border-right: 0; }
.res { width: 27px; border-right: 0; padding-right: 2px; }
.close { width: 47px; border-radius: 0 0 5px 0; background: linear-gradient(#d99684 0, #c8604a 45%, #a82410 50%, #d04a28 100%); }

/* menu and tool bars */
.menubar {
  height: 20px;
  display: flex;
  padding-left: 7px;
  line-height: 19px;
  letter-spacing: -0.35px;
  background: linear-gradient(#fff 0, #e8ebf5 32%, #d6dcee 34%, #dfe4f5 100%);
  border-bottom: 2px solid #b4b9ca;
}
.menubar span:nth-child(1) { width: 41px; }
.menubar span:nth-child(2) { width: 54px; }
.menubar span:nth-child(3) { width: 51px; }
.menubar span:nth-child(4) { width: 63px; }
.menubar span:nth-child(5) { width: 72px; }
.toolbar {
  height: 33px;
  display: flex;
  align-items: center;
  border-top: 1px solid #9b9ca0;
  border-bottom: 2px solid #a0a1a8;
  background: linear-gradient(#fff 0, #e8ebf4 34%, #d3d9ec 36%, #dfe4f5 100%);
}
.toolbar svg { width: 24px; height: 24px; margin-right: 7px; }
.toolbar .grip { width: 2px; height: 28px; margin: 0 8px 0 4px; background: repeating-linear-gradient(#a3a7b5 0 2px, transparent 2px 4px); }
.toolbar .two { margin: 0 9px 0 4px; }
.toolbar .rep { margin-right: 4px; }
.toolbar span { padding-top: 1px; letter-spacing: -0.35px; }

/* working area */
.work { height: 944px; display: flex; align-items: stretch; padding-top: 1px; }
.left { width: 189px; margin-right: 6px; padding-bottom: 2px; display: flex; flex-direction: column; }
.tabs { height: 22px; display: flex; align-items: flex-end; }
.tab {
  height: 20px;
  padding-left: 4px;
  width: 57px;
  line-height: 20px;
  border: 1px solid #898c95;
  border-left: 0;
  border-bottom: 0;
  background: linear-gradient(#f2f2f2, #dedede);
}
.tab.on { width: 52px; height: 23px; padding-left: 7px; line-height: 19px; background: #fff; border-left: 1px solid #898c95; margin-bottom: -1px; position: relative; }
.tree { flex: 1; margin: 0; padding: 3px 0 0; list-style: none; background: #fff; border: 1px solid #828790; }
.tree li { height: 18px; display: flex; align-items: center; white-space: nowrap; position: relative; }
.tree .root { padding-left: 6px; }
.tree .root .i { margin-right: 5px; }
.tree .n { padding-left: 11px; }
.tree .n .i { margin: 0 5px 0 5px; }
.ex { width: 9px; height: 9px; margin-top: 2px; background: #fff; position: relative; }
.tree .c { padding-left: 44px; }
.tree .c .i { margin-right: 5px; }
.tree .n::before, .tree .c::before { content: ""; position: absolute; left: 14px; top: 0; height: 18px; border-left: 1px dotted #888; }
.tree .end::before { height: 9px; }
.tree .n::after { content: ""; position: absolute; left: 21px; top: 9px; width: 4px; border-top: 1px dotted #888; }
.tree .c::after { content: ""; position: absolute; left: 33px; top: 0; width: 11px; height: 18px; border-left: 1px dotted #888; background: repeating-linear-gradient(90deg, #999 0 1px, transparent 1px 2px) 0 9px / 100% 1px no-repeat; }
.tree .last::after { height: 10px; }
.sel { display: flex; align-items: center; height: 18px; width: 75px; margin-left: -2px; padding-left: 1px; border: 1px solid #d9d9d9; border-radius: 3px; background: linear-gradient(#fafafa, #e5e5e5); }

.right { width: 1724px; background: #fff; border: 1px solid #828790; }
.head { height: 25px; display: flex; width: 1722px; background: linear-gradient(#fff 0 40%, #f6f7f9 41%, #f1f2f4 100%); border-bottom: 1px solid #d5d5d5; line-height: 26px; letter-spacing: -0.35px; }
.head span:nth-child(1) { width: 201px; padding-left: 7px; border-right: 1px solid #e3e4e6; }
.head span:nth-child(2) { width: 390px; padding-left: 6px; border-right: 2px solid #e1e2e4; }
.r { height: 19px; width: 590px; padding-left: 21px; display: flex; align-items: center; line-height: 19px; white-space: pre; position: relative; }
.r .i { margin-top: -2px; }
.r .k { width: 168px; padding-left: 2px; margin-right: 2px; letter-spacing: -0.4px; }
.r .w { letter-spacing: -0.28px; }
.r .v { letter-spacing: -0.25px; }
.r .d { letter-spacing: -0.35px; }
.g { padding-left: 5px; }
.hl .k { flex: 1; margin: 0; background: #39f; color: #fff; }
.hl .i { border-radius: 50%; background: #39f; }
.hl .i use { opacity: .5; }
.foc::after { content: ""; position: absolute; left: 37px; right: 0; top: 0; bottom: 0; border: 1px dotted #000; }

/* status bar */
.status { height: 21px; display: flex; background: #f1edec; border-top: 1px solid #fff; }
.status div { display: flex; align-items: center; line-height: 20px; }
.status div:first-child { width: 480px; padding-left: 2px; border-right: 1px solid #d4d0cf; }
.status div:last-child { padding-left: 4px; letter-spacing: -0.27px; }
.status .i { margin-right: 4px; }

/* taskbar */
.taskbar {
  height: 40px;
  display: flex;
  align-items: center;
  letter-spacing: 0;
  border-top: 1px solid #1d2a38;
  box-shadow: inset 0 1px #6d8090;
  background: linear-gradient(90deg, #1c3c5c 0, #264a6c 45px, #2d5a88 120px, #44739f 190px, #2f66a0 250px, #5f91c0 300px, #3d73ab 350px, #6694bf 410px, #6c9fcc 440px, #9cc0dd 478px, #3d5d7b 496px, #0f1a28 520px, #0a1018 700px, #0a0e14 1920px);
}
.orb { width: 60px; padding-left: 7px; }
.t { width: 58px; height: 39px; margin-right: 4px; display: flex; align-items: center; justify-content: center; flex: none; }
.t > svg { width: 32px; height: 32px; }
.t.b { border: 1px solid #8e979e; border-radius: 3px; background: linear-gradient(160deg, #82878c 0, #474c52 45%, #2a2f36 50%, #3e444b 100%); }
.t.lt { border-color: #c5d6e4; background: linear-gradient(160deg, #c6d5e2 0, #8ba9c5 45%, #6c92b7 50%, #9cb8d2 100%); }
.t.act { border-color: #e3e6e8; background: linear-gradient(160deg, #d3d5d6 0, #989c9f 45%, #83878a 50%, #b8bbbd 100%); }
.lol { font: bold 29px "Liberation Serif", serif; fill: #e6d088; }
.poe { font: bold 13px "Liberation Serif", serif; fill: #f2c860; stroke: #1a0c04; stroke-width: .4px; }
.sky { font: bold 25px "Liberation Sans", sans-serif; fill: #fff; }
.cnt { font: 10px "Liberation Sans", sans-serif; fill: #000; }
.ftb { font: 18px "Liberation Serif", serif; color: #2a5d8c; }
.ftb span:nth-child(2) { color: #238042; margin: -9px -2px 0 -2px; }
.ftb span:nth-child(3) { color: #a0202c; }
.tray { margin-left: auto; display: flex; align-items: center; color: #fff; }
.tray svg { width: 16px; height: 16px; margin-right: 8px; }
.tray .de { font-size: 12px; margin-right: 12px; margin-top: -6px; color: #ddd; }
.clock { width: 76px; margin: 0 1px 0 -1px; display: flex; flex-direction: column; align-items: center; line-height: 17px; letter-spacing: -0.35px; }
.desk { width: 23px; height: 38px; border: 1px solid #5b6168; background: linear-gradient(160deg, #4a4e52 0, #1d2025 45%, #0c0f13 50%); }
```
